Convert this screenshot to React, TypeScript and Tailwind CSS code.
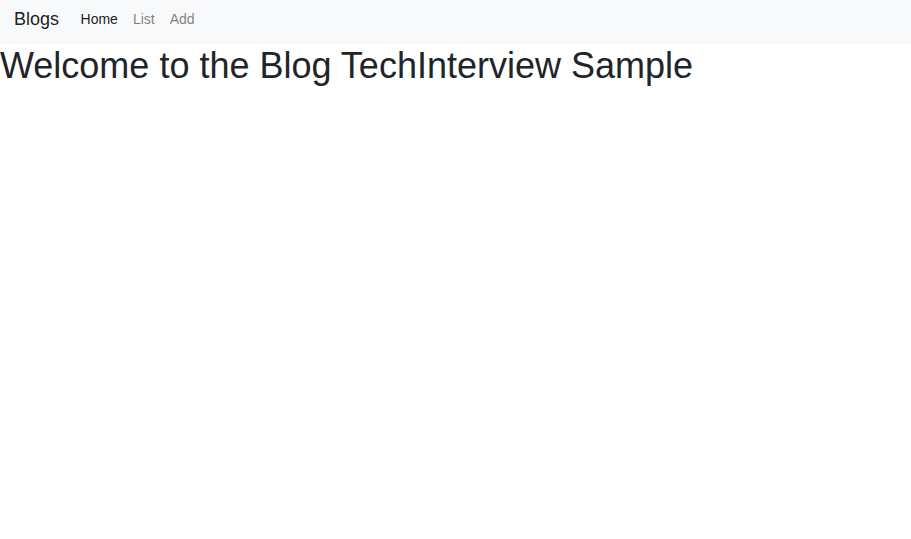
export default function App() {
  return (
    <div className="min-h-screen bg-white font-['Liberation_Sans',Arial,sans-serif] text-[#212529]">
      <nav className="flex h-[44px] items-center bg-[#f8f9fa] px-[14px] pb-[6px]">
        <a href="#" className="mr-[14px] text-[18px] text-black/90">
          Blogs
        </a>
        <ul className="flex items-center text-[14px]">
          <li>
            <a href="#" className="px-[7.5px] text-black/90">Home</a>
          </li>
          <li>
            <a href="#" className="px-[7.5px] text-black/50">List</a>
          </li>
          <li>
            <a href="#" className="px-[7.5px] text-black/50">Add</a>
          </li>
        </ul>
      </nav>
      <h1 className="text-[36px] leading-[1.2] font-medium">
        Welcome to the Blog TechInterview Sample
      </h1>
    </div>
  )
}
